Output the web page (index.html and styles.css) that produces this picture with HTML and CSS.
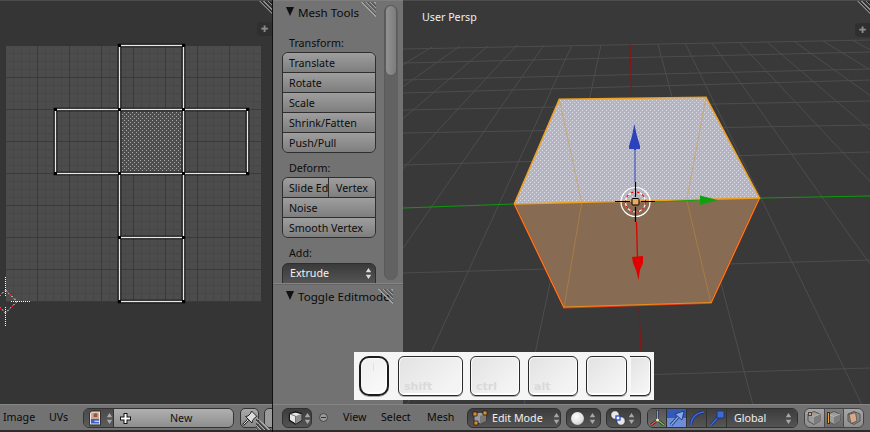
FILE: index.html
```html
<!DOCTYPE html>
<html lang="en">
<head>
<meta charset="utf-8">
<title>Mesh editing</title>
<link rel="stylesheet" href="styles.css">
</head>
<body>
<svg class="defs" width="0" height="0" aria-hidden="true">
  <defs>
    <symbol id="updown" viewBox="0 0 9 16">
      <path d="M4.5 1 8 6.5H1Z" fill="currentColor"/>
      <path d="M4.5 15 8 9.5H1Z" fill="currentColor"/>
    </symbol>
    <symbol id="cube" viewBox="0 0 16 16">
      <path d="M8 1.5 14.5 3.5V10.5L8 14.5 1.5 10.5V3.5Z" fill="#e8e8e8" stroke="#111" stroke-width="1.2"/>
      <path d="M8 6 14.5 3.5V10.5L8 14.5Z" fill="#8e8e8e"/>
      <path d="M1.5 3.5 8 6V14.5" fill="none" stroke="#555" stroke-width=".8"/>
    </symbol>
    <symbol id="greycube" viewBox="0 0 16 16">
      <path d="M8 1.5 14 4V11L8 14.5 2 11V4Z" fill="#9c9c9c" stroke="#555"/>
      <path d="M8 6.5 14 4V11L8 14.5Z" fill="#7c7c7c"/>
      <path d="M2 4 8 6.5 14 4" fill="none" stroke="#bbb" stroke-width=".8"/>
    </symbol>
  </defs>
</svg>
<div class="app">
  <section class="uv">
    <div class="uv-canvas">
      <svg class="fill-svg" width="272" height="404" viewBox="0 0 272 404">
        <defs>
          <pattern id="uvgrid" patternUnits="userSpaceOnUse" x="6" y="46" width="32" height="32">
            <rect width="32" height="32" fill="#4c4c4c"/>
            <path d="M7.5 0V32M15.5 0V32M23.5 0V32M0 7.5H32M0 15.5H32M0 23.5H32" stroke="#464646" fill="none"/>
            <path d="M31.5 0V32M0 31.5H32" stroke="#3a3a3a" fill="none"/>
          </pattern>
          <pattern id="uvdots" patternUnits="userSpaceOnUse" width="4" height="4">
            <rect width="4" height="4" fill="#4f4f4f"/>
            <rect width="1" height="1" fill="#a8a8a8"/>
            <rect x="2" y="2" width="1" height="1" fill="#a8a8a8"/>
          </pattern>
        </defs>
        <rect x="6" y="46" width="255" height="256" fill="url(#uvgrid)"/>
        <rect x="120" y="110" width="63" height="63" fill="url(#uvdots)" shape-rendering="crispEdges"/>
        <g class="uv-edges">
          <path class="edge-black" d="M119.5 45.5H183.5V301.5H119.5ZM55.5 109.5H247.5V173.5H55.5ZM119.5 237.5H183.5"/>
          <path class="edge-white" d="M119.5 45.5H183.5V301.5H119.5ZM55.5 109.5H247.5V173.5H55.5ZM119.5 237.5H183.5"/>
          <path class="edge-verts" d="M118 44h3v3h-3zM182 44h3v3h-3zM54 108h3v3h-3zM118 108h3v3h-3zM182 108h3v3h-3zM246 108h3v3h-3zM54 172h3v3h-3zM118 172h3v3h-3zM182 172h3v3h-3zM246 172h3v3h-3zM118 236h3v3h-3zM182 236h3v3h-3zM118 300h3v3h-3zM182 300h3v3h-3z"/>
        </g>
        <g class="uv-cursor">
          <path class="dot-white" d="M5.5 277V296M5.5 307V327M11 301.5H31"/>
          <path class="dot-diamond" d="M5.5 290 17 301.5 5.5 313 -6 301.5Z"/>
          <path class="dot-red" d="M9 293 12 296M14 305 11 308M2 310 0 308"/>
        </g>
      </svg>
      <span class="hatch hatch-corner"></span>
      <span class="plus-tab">✚</span>
    </div>
    <footer class="header header-uv">
      <span class="menu m-image">Image</span>
      <span class="menu m-uvs">UVs</span>
      <div class="group-new">
        <span class="w-image">
          <svg width="13" height="16" viewBox="0 0 13 16">
            <path d="M.5 2.5 3 .5H12.5V15.5H.5Z" fill="#f2f2f2" stroke="#222"/>
            <rect x="2" y="2" width="9" height="7" fill="#d9a58f"/>
            <rect x="5" y="3" width="4" height="4" fill="#8a5a48"/>
            <rect x="2" y="9" width="9" height="5" fill="#3b63c4"/>
            <rect x="6" y="11" width="5" height="1" fill="#fff"/>
          </svg>
          <svg class="updown-light" width="7" height="13"><use href="#updown"/></svg>
        </span>
        <span class="w-new">
          <svg class="new-plus" width="13" height="13" viewBox="0 0 13 13">
            <path d="M6.5 1V12M1 6.5H12" stroke="#111" stroke-width="4"/>
            <path d="M6.5 2V11M2 6.5H11" stroke="#fff" stroke-width="2"/>
          </svg>
          <span class="new-label">New</span>
        </span>
      </div>
      <span class="w-pin">
        <svg width="16" height="16" viewBox="0 0 16 16">
          <path d="M9.5 1 15 6.5 13 7.5 10.5 10.5 10 13 3.5 6.5 6 6 8.5 3.5Z" fill="#ddd" stroke="#222"/>
          <path d="M6 10 1 15" stroke="#222" stroke-width="2.4"/>
          <path d="M6 10 1.5 14.5" stroke="#eee"/>
        </svg>
      </span>
      <span class="w-next"></span>
      <span class="hatch hatch-bottom"></span>
    </footer>
  </section>

  <section class="main">
    <div class="main-top">
      <aside class="shelf">
        <div class="panel panel-mesh">
          <h2 class="panel-title"><span class="tri"></span>Mesh Tools</h2>
          <span class="hatch hatch-panel"></span>
          <p class="label label-first">Transform:</p>
          <div class="stack">
            <button class="btn">Translate</button>
            <button class="btn">Rotate</button>
            <button class="btn">Scale</button>
            <button class="btn">Shrink/Fatten</button>
            <button class="btn">Push/Pull</button>
          </div>
          <p class="label label-deform">Deform:</p>
          <div class="stack">
            <div class="btn-row">
              <button class="btn btn-slide">Slide Edge</button>
              <button class="btn btn-vertex">Vertex</button>
            </div>
            <button class="btn">Noise</button>
            <button class="btn">Smooth Vertex</button>
          </div>
          <p class="label label-add">Add:</p>
          <div class="select-btn">Extrude
            <svg class="updown-white" width="7" height="13"><use href="#updown"/></svg>
          </div>
        </div>
        <div class="panel-next">
          <h2 class="panel-title panel-title-next"><span class="tri"></span>Toggle Editmode</h2>
          <span class="hatch hatch-panel2"></span>
        </div>
        <div class="scroll"><span class="scroll-thumb"></span></div>
      </aside>

      <div class="view">
        <svg class="fill-svg" width="467" height="404" viewBox="403 0 467 404">
          <defs>
            <pattern id="topdots" patternUnits="userSpaceOnUse" width="4" height="4">
              <rect width="4" height="4" fill="#b4b4c3"/>
              <rect width="1" height="1" fill="#dcdce4"/>
              <rect x="2" y="2" width="1" height="1" fill="#dcdce4"/>
            </pattern>
          </defs>
          <g class="floor">
            <path d="M403 49 870 40M403 63 870 52M403 80 870 69M403 93 870 80M403 110 870 101M403 133 870 125M403 165 870 152M403 273 870 260M403 382 870 368"/>
            <path d="M432 47 -157 405M460 46 -44 405M488 46 68 405M517 45 185 405M544 45 294 405M572 45 407 405M601 45 524 405M658 44 753 405M685 43 862 405M712 43 971 405M739 42 1080 405M767 42 1193 405M795 42 1306 405M823 41 1418 405M852 40 1535 405"/>
          </g>
          <path class="axis-green" d="M403 208 514 204M760 198 870 196"/>
          <path class="axis-red-dark" d="M630 44 631.5 98M639 308 641 352"/>
          <path class="face-top" d="M559.3 99.3 706 97.3 759.5 198 514.3 204Z" fill="url(#topdots)" shape-rendering="crispEdges"/>
          <path class="face-bottom" d="M514.3 204 759.5 198 711 303 564 307.7Z"/>
          <path class="inner-top" d="M559.3 99.3 581.7 203M706 97.3 686.7 200"/>
          <path class="inner-bottom" d="M581.7 203 564 307.7M686.7 200 711 303"/>
          <path class="edge-red" d="M514.3 204 564 307.7 711 303 759.5 198"/>
          <path class="edge-orange" d="M514.3 204 559.3 99.3 706 97.3 759.5 198 514.3 204"/>
          <path class="edge-orange-thin" d="M514.3 204 564 307.7M711 303 759.5 198M564 307 711 302.5"/>
          <path class="gz-blue-line" d="M635 148V182"/>
          <path class="gz-blue" d="M634.3 124 637 136 640 146 640 149 636 149 636 150 634 150 634 149 629 149 629 146 632 136Z"/>
          <path class="gz-green-line" d="M655 202 702 200"/>
          <path class="gz-green" d="M700 195.5 717.7 200 700 205Z"/>
          <path class="gz-red-line" d="M636.5 222 637.5 258"/>
          <path class="gz-red" d="M632 257 643 256 643 263 640 270 638.5 280 636 270 633 263Z"/>
          <circle class="cur-white" cx="635.5" cy="202" r="14.5"/>
          <circle class="cur-white-dash" cx="635.5" cy="202" r="10"/>
          <circle class="cur-red-dash" cx="635.5" cy="202" r="10"/>
          <path class="cur-black" d="M615 201.5H630M641 201.5H655M635.5 182V197M635.5 207V222"/>
          <rect class="cur-center" x="632" y="198.5" width="7" height="6.5" rx="1"/>
        </svg>
        <span class="view-label">User Persp</span>
        <span class="hatch hatch-corner"></span>
        <span class="plus-tab">✚</span>
      </div>
    </div>

    <footer class="header header-3d">
      <span class="w-dark w-editor">
        <svg width="16" height="16"><use href="#cube"/></svg>
        <svg class="updown-light" width="7" height="13"><use href="#updown"/></svg>
      </span>
      <span class="minus-icon"></span>
      <span class="menu m-view">View</span>
      <span class="menu m-select">Select</span>
      <span class="menu m-mesh">Mesh</span>
      <span class="w-dark w-mode">
        <svg width="16" height="16" viewBox="0 0 16 16">
          <path d="M8 2 14 4V11L8 14 2 11V4Z" fill="#9b9b9b" stroke="#333"/>
          <path d="M8 6 14 4V11L8 14Z" fill="#777"/>
          <path d="M1 2h4v4H1zM11 1h4v4h-4zM2 11h4v4H2z" fill="#e08a2c" stroke="#222" stroke-width=".8"/>
        </svg>
        <span class="w-text">Edit Mode</span>
        <svg class="updown-light" width="7" height="13"><use href="#updown"/></svg>
      </span>
      <span class="w-dark w-shade">
        <span class="sphere"></span>
        <svg class="updown-light" width="7" height="13"><use href="#updown"/></svg>
      </span>
      <span class="w-dark w-pivot">
        <svg width="16" height="16" viewBox="0 0 16 16">
          <circle cx="5" cy="5" r="4.2" fill="#e8e8e8" stroke="#222" stroke-width=".7"/>
          <circle cx="11" cy="11" r="4.2" fill="#e8e8e8" stroke="#222" stroke-width=".7"/>
          <rect x="6" y="6" width="4" height="4" fill="#fff" stroke="#2a4dc0" stroke-width="1.3"/>
        </svg>
        <svg class="updown-light" width="7" height="13"><use href="#updown"/></svg>
      </span>
      <div class="manip">
        <span class="m-btn m-axes">
          <svg width="17" height="18" viewBox="0 0 17 18">
            <path d="M8.5 1V11M8.5 11 2 16M8.5 11 15 16" stroke="#222" stroke-width="2.6" fill="none"/>
            <path d="M8.5 1.5V11" stroke="#7d9cf0" stroke-width="1.4"/>
            <path d="M8.5 11 2 16" stroke="#f05040" stroke-width="1.5"/>
            <path d="M8.5 11 15 16" stroke="#60d040" stroke-width="1.5"/>
            <circle cx="8.5" cy="11" r="1.5" fill="#f8e8b8"/>
          </svg>
        </span>
        <span class="m-btn m-active">
          <svg width="16" height="16" viewBox="0 0 16 16">
            <path d="M2 15 10 6" stroke="#16306e" stroke-width="3"/>
            <path d="M2 15 10 6" stroke="#88a8e8" stroke-width="1.5"/>
            <path d="M15 1 13 10 6 4Z" fill="#88a8e8" stroke="#16306e" stroke-width=".8"/>
          </svg>
        </span>
        <span class="m-btn m-dark">
          <svg width="16" height="16" viewBox="0 0 16 16">
            <path d="M2 15C2 8 7 3 15 2" fill="none" stroke="#16306e" stroke-width="3"/>
            <path d="M2 15C2 8 7 3 15 2" fill="none" stroke="#3e6ad8" stroke-width="1.6"/>
          </svg>
        </span>
        <span class="m-btn m-dark">
          <svg width="16" height="16" viewBox="0 0 16 16">
            <path d="M2 15 10 6" stroke="#16306e" stroke-width="3"/>
            <path d="M2 15 10 6" stroke="#3e6ad8" stroke-width="1.6"/>
            <rect x="8" y="1" width="7" height="7" fill="#3e6ad8" stroke="#16306e" stroke-width=".8"/>
          </svg>
        </span>
        <span class="m-global">
          <span class="w-text">Global</span>
          <svg class="updown-light" width="7" height="13"><use href="#updown"/></svg>
        </span>
      </div>
      <div class="selmode">
        <span class="s-btn s-on">
          <svg width="16" height="16"><use href="#greycube"/></svg>
          <i class="s-vert"></i>
        </span>
        <span class="s-btn">
          <svg width="16" height="16"><use href="#greycube"/></svg>
          <i class="s-edge"></i>
        </span>
        <span class="s-btn s-on">
          <svg width="16" height="16" viewBox="0 0 16 16">
            <path d="M8 1.5 14 4V11L8 14.5 2 11V4Z" fill="#8a8a8a" stroke="#555"/>
            <path d="M3 4.5 9.5 2.5 11 11 5 13.5Z" fill="#d8a888" stroke="#444" stroke-width=".7"/>
          </svg>
        </span>
      </div>
    </footer>
  </section>
</div>

<div class="keys">
  <span class="key key-mouse"><i class="wheel"></i></span>
  <span class="key key-shift">shift</span>
  <span class="key key-ctrl">ctrl</span>
  <span class="key key-alt">alt</span>
  <span class="key key-blank"></span>
  <span class="key key-part"></span>
</div>
</body>
</html>
```
FILE: styles.css
```css
* { box-sizing: border-box; }
html, body { margin: 0; padding: 0; }
body {
  width: 870px;
  height: 432px;
  overflow: hidden;
  position: relative;
  background: #2c2c2c;
  font: 10.7px "Noto Sans", "Open Sans", sans-serif;
  color: #0c0c0c;
}
.defs { position: absolute; }
.app { display: flex; height: 432px; }

/* UV editor */
.uv { width: 272px; flex: none; display: flex; flex-direction: column; }
.uv-canvas {
  position: relative;
  height: 404px;
  background: #353535;
  border-top: 1px solid #4c4c4c;
  overflow: hidden;
}
.fill-svg { display: block; position: absolute; left: 0; top: 0; }
.uv-canvas .fill-svg { top: -1px; }
.edge-black { fill: none; stroke: #000; stroke-width: 3.6; }
.edge-white { fill: none; stroke: #e8e8e8; stroke-width: 1.5; }
.edge-verts { fill: #000; }
.dot-white { fill: none; stroke: #fff; stroke-dasharray: 1 1; shape-rendering: crispEdges; }
.dot-diamond { fill: none; stroke: #fff; stroke-dasharray: 2 2; }
.dot-red { fill: none; stroke: #e01818; }

.hatch { position: absolute; display: block; }
.hatch-corner {
  right: 0; top: 0; width: 13px; height: 13px;
  background: repeating-linear-gradient(45deg, #8c8c8c 0 1px, #2a2a2a 1px 2px, transparent 2px 3px);
  clip-path: polygon(0 0, 100% 0, 100% 100%);
}
.plus-tab {
  position: absolute; right: 0; top: 22px;
  width: 15px; height: 14px;
  background: #2f2f2f;
  border-radius: 4px 0 0 4px;
  color: #8a8a8a;
  font: 9px/14px "DejaVu Sans", sans-serif;
  text-align: center;
}
.uv-canvas .plus-tab { top: 21px; }

/* Headers */
.header {
  height: 28px;
  padding: 3px 0 0;
  display: flex;
  align-items: flex-start;
  background: #727272;
  border-top: 1px solid #858585;
  border-bottom: 2px solid #2c2c2c;
  position: relative;
  overflow: hidden;
}
.menu { line-height: 19px; color: #0a0a0a; flex: none; }
.m-image { width: 46px; margin-left: 3px; }
.m-uvs { width: 34px; }
.group-new {
  display: flex; width: 151px; height: 20px; flex: none;
  border: 1px solid #333; border-radius: 6px; overflow: hidden;
}
.w-image {
  width: 30px; display: flex; align-items: center; gap: 5px; padding-left: 5px;
  background: linear-gradient(#4a4a4a, #5c5c5c);
  border-right: 1px solid #333;
}
.w-new {
  flex: 1; display: flex; align-items: center; position: relative;
  background: linear-gradient(#b0b0b0, #8e8e8e);
}
.new-plus { margin-left: 5px; flex: none; }
.new-label { position: absolute; left: 56px; top: 0; line-height: 18px; color: #111; }
.updown-light { color: #a8a8a8; flex: none; }
.updown-white { color: #dcdcdc; }
.w-pin {
  width: 19px; height: 20px; margin-left: 6px; flex: none;
  border: 1px solid #333; border-radius: 5px;
  background: linear-gradient(#aaa, #868686);
  display: flex; align-items: center; justify-content: center;
}
.w-next {
  width: 20px; height: 20px; margin-left: 5px; flex: none;
  border: 1px solid #333; border-radius: 5px;
  background: #9a9a9a;
}
.hatch-bottom {
  right: 0; bottom: 0; width: 16px; height: 13px;
  background: repeating-linear-gradient(45deg, #aaa 0 1px, #444 1px 2px, transparent 2px 3px);
  clip-path: polygon(0 0, 100% 100%, 0 100%);
}

/* Main */
.main {
  flex: 1; display: flex; flex-direction: column;
  border-left: 1px solid #111;
}
.main-top { display: flex; height: 404px; }

/* Tool shelf */
.shelf {
  width: 130px; flex: none; height: 404px;
  background: #727272;
  position: relative;
  border-top: 1px solid #7e7e7e;
}
.panel { height: 282px; padding: 0 0 0 9px; overflow: hidden; position: relative; }
.panel-title {
  margin: 0; font-size: 11.6px; font-weight: 400; height: 22px; padding-top: 2px;
  line-height: 20px; color: #0a0a0a; display: flex; align-items: center;
}
.tri {
  width: 0; height: 0; margin: -4px 4px 0 4px;
  border-left: 4.5px solid transparent;
  border-right: 4.5px solid transparent;
  border-top: 9px solid #111;
}
.panel-next { border-top: 1px solid #848484; padding-left: 9px; position: relative; height: 100px; box-shadow: inset 0 1px 0 #666; }
.panel-title-next { height: 24px; line-height: 22px; }
.hatch-panel {
  left: 87px; top: 1px; width: 16px; height: 16px;
  background: repeating-linear-gradient(45deg, #a0a0a0 0 1px, #5a5a5a 1px 2px, transparent 2px 3px);
  clip-path: polygon(0 0, 100% 0, 100% 100%);
}
.hatch-panel2 {
  left: 104px; top: 5px; width: 16px; height: 16px;
  background: repeating-linear-gradient(45deg, #a0a0a0 0 1px, #5a5a5a 1px 2px, transparent 2px 3px);
  clip-path: polygon(0 0, 100% 0, 100% 100%);
}
.label { margin: 8px 0 2px; height: 15px; line-height: 17px; padding-left: 7px; color: #0c0c0c; }
.label-first { margin-top: 12px; }
.label-deform { margin-top: 7px; }
.label-add { margin-top: 7px; margin-bottom: 3px; }
.stack {
  width: 94px;
  border: 1px solid #2e2e2e;
  border-radius: 6px;
  overflow: hidden;
  display: flex; flex-direction: column;
}
.btn {
  display: block; width: 100%; height: 20px; padding: 0 0 0 6px; margin: 0;
  border: 0; border-bottom: 1px solid #2e2e2e;
  background: linear-gradient(#9e9e9e, #7e7e7e);
  font: inherit; color: #0c0c0c; text-align: left; white-space: nowrap; overflow: hidden;
  line-height: 18px;
}
.stack > .btn:last-child { border-bottom: 0; height: 19px; }
.btn-row { display: flex; height: 20px; }
.btn-slide { width: 46px; flex: none; border-right: 1px solid #2e2e2e; }
.btn-vertex { flex: 1; padding-left: 7px; }
.select-btn {
  margin-top: 2px;
  width: 94px; height: 24px; padding-left: 7px;
  border: 1px solid #2e2e2e; border-radius: 6px 6px 0 0;
  background: linear-gradient(#3a3a3a, #585858);
  color: #f2f2f2; line-height: 18px;
  position: relative;
}
.updown-white { position: absolute; right: 3px; top: 3px; }
.scroll {
  position: absolute; left: 111px; top: 4px; width: 14px; height: 275px;
  background: #626262; border-radius: 7px; padding: 0 1px;
  box-shadow: inset 1px 0 0 #5a5a5a;
}
.scroll-thumb {
  display: block; height: 71px; border-radius: 6px;
  background: linear-gradient(90deg, #929292, #7c7c7c);
  border: 1px solid #5c5c5c;
}

/* 3D view */
.view {
  flex: 1; position: relative; height: 404px; overflow: hidden;
  background: #393939;
  border-top: 1px solid #4e4e4e;
}
.view .fill-svg { top: -1px; }
.view-label { position: absolute; left: 19px; top: 9px; color: #f0f0f0; line-height: 15px; }
.floor path { fill: none; stroke: #4d4d4d; stroke-width: 1; }
.axis-green { fill: none; stroke: #0f9a0f; stroke-width: 1; }
.axis-red-dark { fill: none; stroke: #8a1414; stroke-width: 1; }
.face-bottom { fill: #876b52; }
.inner-top { fill: none; stroke: #c9a67c; stroke-width: 1; }
.inner-bottom { fill: none; stroke: #a47e48; stroke-width: 1; }
.edge-red { fill: none; stroke: #e83a10; stroke-width: 1.6; }
.edge-orange { fill: none; stroke: #f0a020; stroke-width: 1.5; }
.edge-orange-thin { fill: none; stroke: #f0a020; stroke-width: .8; }
.gz-blue-line { fill: none; stroke: #2c42bd; stroke-width: 1; }
.gz-blue { fill: #2c42bd; }
.gz-green-line { fill: none; stroke: #12a012; stroke-width: 1; }
.gz-green { fill: #12a012; }
.gz-red-line { fill: none; stroke: #e00000; stroke-width: 1.3; }
.gz-red { fill: #e00000; }
.cur-white { fill: none; stroke: #fff; stroke-width: 1.2; }
.cur-white-dash { fill: none; stroke: #fff; stroke-width: 1.2; }
.cur-red-dash { fill: none; stroke: #e01010; stroke-width: 1.2; stroke-dasharray: 3 3; }
.cur-black { fill: none; stroke: #000; stroke-width: 1.2; }
.cur-center { fill: #eda95e; stroke: #000; stroke-width: 1; }

/* 3D header */
.header-3d { padding-left: 9px; }
.w-dark {
  height: 20px; flex: none;
  display: flex; align-items: center;
  border: 1px solid #303030; border-radius: 6px;
  background: linear-gradient(#3c3c3c, #545454);
  color: #f0f0f0;
}
.w-editor { width: 30px; padding-left: 5px; gap: 1px; }
.minus-icon {
  width: 9px; height: 9px; margin: 5px 0 0 7px; flex: none;
  border-radius: 50%; background: #9a9a9a; border: 1px solid #444; position: relative;
}
.minus-icon::after { content: ""; position: absolute; left: 1px; right: 1px; top: 3px; height: 1px; background: #333; }
.m-view { width: 38px; margin-left: 15px; }
.m-select { width: 46px; }
.m-mesh { width: 40px; }
.w-mode { width: 94px; padding-left: 4px; }
.w-text { flex: 1; padding-left: 4px; color: #f0f0f0; }
.w-shade { width: 35px; margin-left: 5px; padding-left: 4px; justify-content: space-between; padding-right: 4px; }
.sphere {
  width: 13px; height: 13px; border-radius: 50%;
  background: radial-gradient(circle at 40% 35%, #fff, #ddd 60%, #999);
}
.w-pivot { width: 35px; margin-left: 5px; padding: 0 5px 0 3px; justify-content: space-between; }
.manip {
  display: flex; width: 151px; height: 20px; margin-left: 6px; flex: none;
  border: 1px solid #303030; border-radius: 6px; overflow: hidden;
}
.m-btn { width: 20px; flex: none; display: flex; align-items: center; justify-content: center; border-right: 1px solid #303030; }
.m-axes { width: 19px; background: linear-gradient(#565656, #6c6c6c); }
.m-active { background: linear-gradient(#3358b8 0 50%, #6d8dd8 50%); }
.m-dark { background: linear-gradient(#3e3e3e, #565656); }
.m-global {
  flex: 1; display: flex; align-items: center; padding: 0 5px 0 3px;
  background: linear-gradient(#3c3c3c, #545454);
}
.m-global .w-text { padding-left: 4px; }
.selmode {
  display: flex; width: 60px; height: 20px; margin-left: 6px; flex: none;
  border: 1px solid #444; border-radius: 6px; overflow: hidden;
}
.s-btn {
  flex: 1; display: flex; align-items: center; justify-content: center;
  position: relative;
  background: linear-gradient(#7e7e7e, #6a6a6a);
  border-right: 1px solid #4a4a4a;
}
.s-btn:last-child { border-right: 0; }
.s-on { background: linear-gradient(#a6a6a6, #8e8e8e); }
.s-vert { position: absolute; left: 3px; top: 3px; width: 4px; height: 4px; background: #e8a070; border: 1px solid #444; }
.s-edge { position: absolute; left: 2px; top: 3px; width: 3px; height: 12px; background: #e8a040; border: 1px solid #333; }

/* Keycast overlay */
.keys {
  position: absolute; left: 354px; top: 352px; width: 300px; height: 48px;
  background: #f5f5f5;
  display: flex; padding: 4px 0 0 5px;
}
.key {
  display: block; height: 40px; flex: none;
  border: 1px solid #2a2a2a; border-radius: 6px;
  background: linear-gradient(135deg, #e2e2e2, #f4f4f4 80%);
  box-shadow: inset -1px -2px 0 #fff, inset 1px 1px 0 #f8f8f8, 0 1px 0 #aaa;
  color: #dadada; font: 700 11px/14px "DejaVu Sans", sans-serif;
  padding: 23px 0 0 5px;
}
.key-mouse { width: 30px; border-radius: 10px; border: 2px solid #1c1c1c; background: linear-gradient(135deg, #eee, #fbfbfb); position: relative; padding: 0; }
.wheel { position: absolute; left: 12px; top: 5px; width: 1px; height: 8px; background: #e2e2e2; }
.key-shift { width: 65px; margin-left: 9px; }
.key-ctrl { width: 50px; margin-left: 7px; }
.key-alt { width: 50px; margin-left: 8px; }
.key-blank { width: 41px; margin-left: 8px; }
.key-part { width: 21px; margin-left: 3px; border-left: 0; border-radius: 0 6px 6px 0; }
```
